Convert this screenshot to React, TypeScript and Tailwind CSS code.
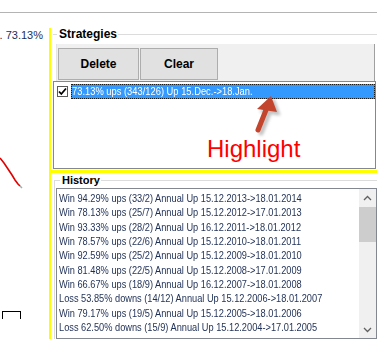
import React from "react";

const items = [
  "Win 94.29% ups (33/2) Annual Up 15.12.2013->18.01.2014",
  "Win 78.13% ups (25/7) Annual Up 15.12.2012->17.01.2013",
  "Win 93.33% ups (28/2) Annual Up 16.12.2011->18.01.2012",
  "Win 78.57% ups (22/6) Annual Up 15.12.2010->18.01.2011",
  "Win 92.59% ups (25/2) Annual Up 15.12.2009->18.01.2010",
  "Win 81.48% ups (22/5) Annual Up 15.12.2008->17.01.2009",
  "Win 66.67% ups (18/9) Annual Up 16.12.2007->18.01.2008",
  "Loss 53.85% downs (14/12) Annual Up 15.12.2006->18.01.2007",
  "Win 79.17% ups (19/5) Annual Up 15.12.2005->18.01.2006",
  "Loss 62.50% downs (15/9) Annual Up 15.12.2004->17.01.2005",
];

function Chevron({ up }: { up: boolean }) {
  return (
    <svg width="9" height="6" viewBox="0 0 9 6">
      <polyline
        points={up ? "1,5 4.5,1.5 8,5" : "1,1 4.5,4.5 8,1"}
        fill="none"
        stroke="#606060"
        strokeWidth="1.3"
      />
    </svg>
  );
}

export default function App() {
  return (
    <div className="w-[377px] h-[339px] overflow-hidden bg-white flex flex-col font-['Liberation_Sans',Arial,sans-serif]">
      <div className="h-[12px] shrink-0" />
      <div className="h-px shrink-0 bg-[#b4b4b4]" />
      <div className="flex flex-1 min-h-0">
        {/* left chart column */}
        <div className="w-[49px] shrink-0 flex flex-col">
          <div className="h-[29px] pt-[16px] pr-[6px] flex justify-end overflow-hidden text-[11px] leading-[13px] text-[#1b2f5a]">
            <span className="shrink-0 whitespace-nowrap">n. 73.13%</span>
          </div>
          <svg width="49" height="297" viewBox="0 0 49 297" className="block">
            <polyline
              points="0,116 4,121 8,127 12,133 15,138 18,142 20,144"
              fill="none"
              stroke="#e00000"
              strokeWidth="1.6"
            />
            <line x1="20" y1="144" x2="22" y2="146" stroke="#a8a8a8" strokeWidth="1.4" />
            <g shapeRendering="crispEdges" stroke="#000" strokeWidth="1">
              <line x1="2" y1="269.5" x2="21" y2="269.5" />
              <line x1="2.5" y1="269" x2="2.5" y2="277" />
              <line x1="20.5" y1="269" x2="20.5" y2="277" />
            </g>
          </svg>
        </div>
        {/* yellow vertical */}
        <div className="w-[2px] shrink-0 mt-[15px] bg-[#ffff00]" />
        {/* right column */}
        <div className="flex-1 flex flex-col">
          {/* Strategies group */}
          <div className="pt-[14px] flex items-center h-[28px]">
            <div className="ml-[2px] w-[4px] h-px bg-[#dcdcdc]" />
            <span className="ml-[2px] text-[12px] leading-[14px] font-bold text-black">Strategies</span>
            <div className="ml-[1px] flex-1 h-px bg-[#dcdcdc]" />
          </div>
          <div className="mt-[3px] ml-[5px] w-[319px] h-[38px] bg-[#f0f0f0] border-r border-[#a0a0a0] border-l border-l-[#e4e4e4] flex gap-[1px] pl-[1px] pt-[4px]">
            <button className="w-[81px] h-[32px] bg-[#e1e1e1] border border-[#adadad] text-[12px] font-bold text-black flex items-center justify-center">
              Delete
            </button>
            <button className="w-[78px] h-[32px] bg-[#e1e1e1] border border-[#adadad] text-[12px] font-bold text-black flex items-center justify-center">
              Clear
            </button>
          </div>
          <div className="ml-[2px] w-[323px] h-[88px] border border-[#828790] bg-white relative shrink-0">
            <div className="mt-[2px] h-[15px] flex items-center">
              <div className="ml-[3px] w-[11px] h-[11px] border border-[#5a5a5a] bg-white flex items-center justify-center">
                <svg width="9" height="9" viewBox="0 0 9 9">
                  <polyline points="1,4.5 3.3,7 8,1.5" fill="none" stroke="#000" strokeWidth="1.8" />
                </svg>
              </div>
              <div className="ml-[3px] flex-1 h-[15px] bg-[#3399ff] border border-dotted border-[#1a1a1a] flex items-center overflow-hidden">
                <span className="whitespace-nowrap inline-block scale-x-[0.85] origin-left text-[11px] leading-[13px] text-white">
                  73.13% ups (343/126) Up 15.Dec.-&gt;18.Jan.
                </span>
              </div>
            </div>
            <div className="mt-[36px] ml-[153px] text-[24px] leading-[28px] text-[#ff0000]">Highlight</div>
            <svg
              width="321"
              height="86"
              viewBox="0 0 321 86"
              className="absolute left-0 top-0 pointer-events-none"
            >
              <defs>
                <filter id="sh" x="-50%" y="-50%" width="200%" height="200%">
                  <feGaussianBlur stdDeviation="1.6" />
                </filter>
              </defs>
              <g transform="translate(3,3)" opacity="0.45" filter="url(#sh)" fill="#7a7a7a" stroke="#7a7a7a">
                <polygon points="217,14 203,27 223,30" />
                <line x1="212" y1="28" x2="204" y2="48" strokeWidth="5" strokeLinecap="round" />
              </g>
              <polygon points="217,14 203,27 223,30" fill="#c4452d" />
              <line x1="212" y1="28" x2="204" y2="48" stroke="#c4452d" strokeWidth="5" strokeLinecap="round" />
            </svg>
          </div>
          {/* yellow horizontal */}
          <div className="mt-[1px] ml-[-2px] h-[3px] bg-[#ffff00] shrink-0" />
          {/* History group */}
          <div className="ml-[3px] flex flex-col">
            <div className="h-[14px] flex items-center">
              <div className="self-end h-[7px] w-[6px] border-l border-t border-[#dcdcdc]" />
              <span className="ml-[2px] text-[11px] leading-[14px] font-bold text-black">History</span>
              <div className="ml-[1px] flex-1 h-px bg-[#dcdcdc]" />
            </div>
            <div className="border-l border-[#dcdcdc] pt-[1px] pl-[1px]">
              <div className="w-[321px] h-[151px] border border-[#828790] bg-white flex">
                <div className="flex-1 pl-[2px] pt-[2px] overflow-hidden">
                  {items.map((t) => (
                    <div key={t} className="h-[14.33px] leading-[14.33px] text-[11px] text-[#1e2f55] whitespace-nowrap">
                      <span className="inline-block scale-x-[0.84] origin-left">{t}</span>
                    </div>
                  ))}
                </div>
                <div className="w-[17px] bg-[#f0f0f0] flex flex-col">
                  <div className="h-[17px] flex items-center justify-center">
                    <Chevron up />
                  </div>
                  <div className="mt-[1px] h-[35px] bg-[#cdcdcd]" />
                  <div className="flex-1" />
                  <div className="h-[17px] flex items-center justify-center">
                    <Chevron up={false} />
                  </div>
                </div>
              </div>
            </div>
          </div>
        </div>
      </div>
    </div>
  );
}
